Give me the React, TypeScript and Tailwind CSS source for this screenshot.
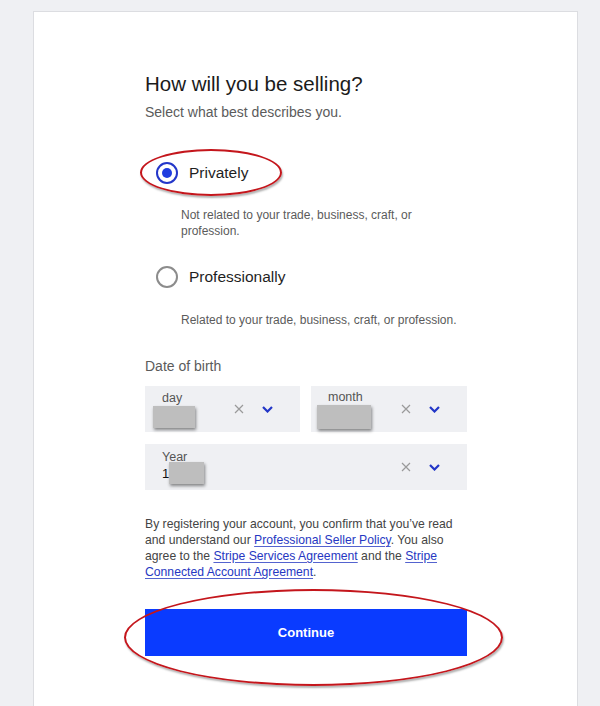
import React from "react";

const font = { fontFamily: '"Liberation Sans", Arial, sans-serif' };

const ClearIcon = () => (
  <svg width="10" height="10" viewBox="0 0 10 10" className="shrink-0">
    <path d="M1 1L9 9M9 1L1 9" stroke="#9a9a9a" strokeWidth="1.2" />
  </svg>
);

const Chevron = () => (
  <svg width="11" height="7" viewBox="0 0 11 7" className="shrink-0">
    <path d="M1 1l4.5 4.5L10 1" stroke="#2236c7" strokeWidth="2.2" fill="none" />
  </svg>
);

const Redacted = ({ className }: { className: string }) => (
  <div className={`bg-[#bebebe] shadow-[1px_2px_3px_rgba(0,0,0,0.45)] ${className}`} />
);

const Field = ({ label, children, className = "" }: { label: string; children: React.ReactNode; className?: string }) => (
  <div className={`flex h-[46px] items-center bg-[#eff0f3] pr-[27px] ${className}`}>
    <div className="flex flex-1 flex-col pl-[17px] pt-[1px]">
      <span className="text-[12.5px] leading-[13px] text-[#555]">{label}</span>
      {children}
    </div>
    <div className="flex items-center gap-[18px]">
      <ClearIcon />
      <Chevron />
    </div>
  </div>
);

const Radio = ({ checked, label }: { checked?: boolean; label: string }) => (
  <div className="flex h-6 items-center gap-[11px] pl-[11px]">
    <span
      className={`flex h-[22px] w-[22px] items-center justify-center rounded-full border-2 ${
        checked ? "border-[#2336c9]" : "border-[#8c8c8c]"
      }`}
    >
      {checked && <span className="h-[10px] w-[10px] rounded-full bg-[#1f3ce0]" />}
    </span>
    <span className="text-[15.5px] text-[#1f1f1f]">{label}</span>
  </div>
);

const Link = ({ children }: { children: React.ReactNode }) => (
  <a href="#" className="text-[#2637c2] underline decoration-[#5463cf] underline-offset-2">
    {children}
  </a>
);

export default function App() {
  return (
    <div className="min-h-[706px] bg-[#eff0f3] pt-[11px]" style={font}>
      <div className="relative ml-[33px] min-h-[695px] w-[545px] border border-b-0 border-[#dcdde1] bg-white pl-[111px] pt-[59px]">
        <div className="w-[322px]">
          <h1 className="text-[20.5px] leading-[26px] text-[#1b1b1b]">How will you be selling?</h1>
          <p className="mt-[6px] text-[14px] leading-[18px] text-[#5b5b5b]">Select what best describes you.</p>

          <div className="mt-[40px]">
            <Radio checked label="Privately" />
            <p className="mt-[22px] pl-[36px] pr-[20px] text-[12px] leading-4 text-[#5b5b5b]">
              Not related to your trade, business, craft, or profession.
            </p>
          </div>

          <div className="mt-[26px]">
            <Radio label="Professionally" />
            <p className="mt-[23px] pl-[36px] text-[12px] leading-4 text-[#5b5b5b]">
              Related to your trade, business, craft, or profession.
            </p>
          </div>

          <p className="mt-[29px] text-[14px] leading-[18px] text-[#5b5b5b]">Date of birth</p>

          <div className="mt-[11px] flex gap-[11px]">
            <Field label="day" className="w-[155px]">
              <Redacted className="-ml-[9px] mt-[1px] h-[22px] w-[42px]" />
            </Field>
            <Field label="month" className="w-[156px]">
              <Redacted className="-ml-[11px] mt-[1px] h-[24px] w-[54px]" />
            </Field>
          </div>
          <Field label="Year" className="mt-[12px] w-[322px]">
            <div className="flex items-center">
              <span className="text-[13px] leading-[18px] text-[#111]">1</span>
              <Redacted className="-mt-[2px] h-[22px] w-[35px]" />
            </div>
          </Field>

          <p className="mt-[26px] text-[12.2px] leading-4 text-[#444]">
            By registering your account, you confirm that you’ve read and understand our{" "}
            <Link>Professional Seller Policy</Link>. You also agree to the <Link>Stripe Services Agreement</Link> and
            the <Link>Stripe Connected Account Agreement</Link>.
          </p>

          <button className="mt-[29px] flex h-[47px] w-[322px] items-center justify-center bg-[#0a3bff] text-[13px] font-bold text-white">
            Continue
          </button>
        </div>

        <div className="pointer-events-none absolute left-[106px] top-[137px] h-[47px] w-[142px] rounded-[50%] border-[2.5px] border-[#c4161c] shadow-[1px_2px_2px_rgba(0,0,0,0.3)]" />
        <div className="pointer-events-none absolute left-[90px] top-[577px] h-[97px] w-[379px] rounded-[50%] border-[2.5px] border-[#c4161c] shadow-[1px_2px_2px_rgba(0,0,0,0.3)]" />
      </div>
    </div>
  );
}
